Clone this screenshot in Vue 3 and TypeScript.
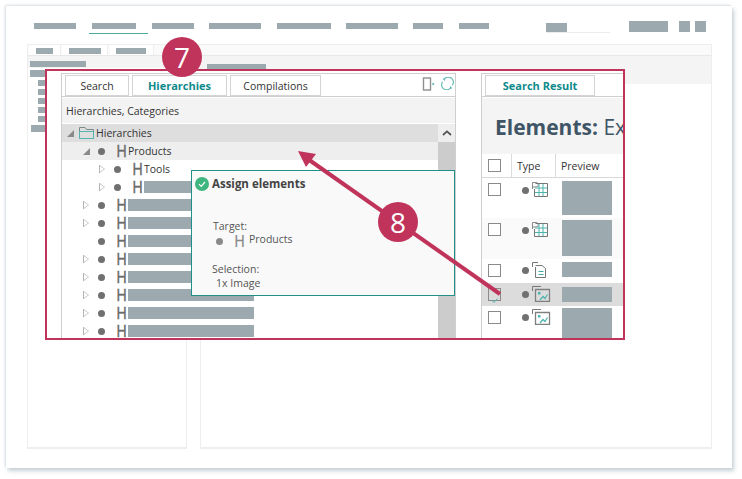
<script setup lang="ts">

	interface TreeRow {
		level: number;
		toggle: 'open' | 'closed' | 'none';
		label?: string;
		bar: number;
		active?: boolean;
	}

	interface ResultRow {
		icon: 'table' | 'doc' | 'image';
		height: number;
		thumbTop: number;
		thumbHeight: number;
		iconTop: number;
		stripe?: boolean;
		selected?: boolean;
	}

	const navBars = [
		{ left: 0, width: 42 },
		{ left: 16, width: 44 },
		{ left: 16, width: 42 },
		{ left: 15, width: 52 },
		{ left: 16, width: 54 },
		{ left: 15, width: 52 },
		{ left: 15, width: 30 },
		{ left: 16, width: 30 },
	];

	const sideBars = [79, 88, 97, 105, 114];

	const treeRows: TreeRow[] = [
		{ level: 1, toggle: 'open', label: 'Products', bar: 0, active: true },
		{ level: 2, toggle: 'closed', label: 'Tools', bar: 0 },
		{ level: 2, toggle: 'closed', bar: 110 },
		{ level: 1, toggle: 'closed', bar: 126 },
		{ level: 1, toggle: 'closed', bar: 126 },
		{ level: 1, toggle: 'none', bar: 126 },
		{ level: 1, toggle: 'closed', bar: 126 },
		{ level: 1, toggle: 'closed', bar: 126 },
		{ level: 1, toggle: 'closed', bar: 126 },
		{ level: 1, toggle: 'closed', bar: 126 },
		{ level: 1, toggle: 'closed', bar: 126 },
	];

	const resultRows: ResultRow[] = [
		{ icon: 'table', height: 40, thumbTop: 3, thumbHeight: 34, iconTop: 4 },
		{ icon: 'table', height: 41, thumbTop: 2, thumbHeight: 36, iconTop: 4, stripe: true },
		{ icon: 'doc', height: 24, thumbTop: 3, thumbHeight: 15, iconTop: 3 },
		{ icon: 'image', height: 23, thumbTop: 4, thumbHeight: 15, iconTop: 3, selected: true },
		{ icon: 'image', height: 40, thumbTop: 2, thumbHeight: 34, iconTop: 3 },
	];

</script>

<template>
	<div class="page">
		<div class="sheet">
			<nav class="top-nav">
				<div class="nav-items">
					<span
						v-for="(item, i) in navBars"
						:key="i"
						class="nav-item"
						:class="{ current: i === 1 }"
						:style="{ marginLeft: item.left + 'px', width: item.width + 'px' }"
					></span>
				</div>
				<div class="nav-tools">
					<div class="nav-search"><span class="block"></span></div>
					<span class="block wide"></span>
					<span class="block square first"></span>
					<span class="block square"></span>
				</div>
			</nav>

			<div class="back-app">
				<div class="back-tabs">
					<div class="back-tab t1"><span></span></div>
					<div class="back-tab t2"><span></span></div>
					<div class="back-tab t3"><span></span></div>
				</div>
				<div class="back-body">
					<aside class="back-side">
						<div class="side-head"><span class="block"></span></div>
						<span class="block side-root"></span>
						<span v-for="top in sideBars" :key="top" class="block side-leaf"></span>
						<span class="block side-root second"></span>
					</aside>
					<section class="back-main">
						<div class="main-head"><span class="block"></span></div>
					</section>
				</div>
			</div>

			<div class="callout">
				<div class="pane tree-pane">
					<div class="tabs">
						<div class="tab">Search</div>
						<div class="tab active">Hierarchies</div>
						<div class="tab">Compilations</div>
						<div class="tab-tools">
							<svg width="13" height="14" viewBox="0 0 13 14">
								<rect x="1.5" y="1" width="7" height="12" fill="#fff" stroke="#8f8f8f" stroke-width="1.4" />
								<path d="M10.5 5.5 L12.5 7 L10.5 8.5 Z" fill="#45aaa5" />
							</svg>
							<svg width="13" height="13" viewBox="0 0 13 13" fill="none">
								<path d="M3.2 2.2 A5 5 0 0 1 11.4 8.2 M9.8 10.8 A5 5 0 0 1 1.6 4.8" stroke="#5cb6b1" stroke-width="1.1" />
								<path d="M1.6 1.6 L4.4 1.4 L3.6 4 Z M11.4 11.4 L8.6 11.6 L9.4 9 Z" fill="#5cb6b1" />
							</svg>
						</div>
					</div>
					<div class="pane-title">Hierarchies, Categories</div>
					<div class="tree">
						<div class="tree-list">
							<div class="tree-row root">
								<span class="toggle root-toggle"><i class="tri-filled"></i></span>
								<svg class="folder" width="15" height="12" viewBox="0 0 15 12" fill="none">
									<path d="M0.5 11.5 V0.5 H6 L7.5 2.5 H14.5 V11.5 Z" stroke="#7a8a8a" />
									<path d="M0.5 4.5 H14.5 V11.5 H0.5 Z" stroke="#55b5b0" />
								</svg>
								<span class="row-label">Hierarchies</span>
							</div>
							<div
								v-for="(row, i) in treeRows"
								:key="i"
								class="tree-row"
								:class="['level-' + row.level, { active: row.active }]"
							>
								<span class="toggle">
									<i v-if="row.toggle === 'open'" class="tri-filled"></i>
									<i v-else-if="row.toggle === 'closed'" class="tri-open"></i>
								</span>
								<span class="dot"></span>
								<span class="h-mark">H</span>
								<span v-if="row.label" class="row-label">{{ row.label }}</span>
								<span v-else class="block row-bar" :style="{ width: row.bar + 'px' }"></span>
							</div>
						</div>
						<div class="scrollbar">
							<div class="scroll-up">
								<svg width="10" height="6" viewBox="0 0 10 6" fill="none">
									<path d="M1 5 L5 1.4 L9 5" stroke="#555" stroke-width="1.8" />
								</svg>
							</div>
						</div>
					</div>

					<div class="assign-tip">
						<div class="tip-title">
							<svg width="14" height="14" viewBox="0 0 14 14" fill="none">
								<circle cx="7" cy="7" r="7" fill="#3fb67f" />
								<path d="M4 7.2 L6.2 9.4 L10 5" stroke="#fff" stroke-width="1.2" />
							</svg>
							<span>Assign elements</span>
						</div>
						<div class="tip-label target">Target:</div>
						<div class="tip-target">
							<span class="dot light"></span>
							<span class="h-mark light">H</span>
							<span class="tip-product">Products</span>
						</div>
						<div class="tip-label selection">Selection:</div>
						<div class="tip-count">1x Image</div>
					</div>
				</div>

				<div class="pane result-pane">
					<div class="tabs result-tabs">
						<div class="tab active result-tab">Search Result</div>
					</div>
					<div class="result-head">
						<b>Elements:</b> Ex
					</div>
					<div class="result-cols">
						<div class="col-check"><span class="check"></span></div>
						<div class="col-type">Type</div>
						<div class="col-preview">Preview</div>
					</div>
					<div
						v-for="(row, i) in resultRows"
						:key="i"
						class="result-row"
						:class="{ stripe: row.stripe, selected: row.selected }"
						:style="{ height: row.height + 'px' }"
					>
						<div class="col-check">
							<span class="check row-check">
								<svg v-if="row.selected" width="11" height="11" viewBox="0 0 11 11" fill="none">
									<path d="M2.5 5 L5 7.5 L8.5 3.5" stroke="#55b5b0" />
								</svg>
							</span>
						</div>
						<div class="type-cell" :style="{ paddingTop: row.iconTop + 'px' }">
							<span class="dot"></span>
							<svg v-if="row.icon === 'table'" class="type-icon" width="18" height="16" viewBox="0 0 18 16" fill="none">
								<path d="M0.5 7 V0.5 H4 A2 2 0 0 1 4 5 H0.5" stroke="#8a8a8a" />
								<path d="M3 6 H15 M3 10.5 H15 M7 2 V14 M11 2 V14" stroke="#4db3ae" />
								<path d="M3.5 1.5 H15.5 V14.5 H2.5 V7" stroke="#777" />
							</svg>
							<svg v-else-if="row.icon === 'doc'" class="type-icon" width="18" height="16" viewBox="0 0 18 16" fill="none">
								<path d="M0.5 5 V0.5 H6" stroke="#777" />
								<path d="M3.5 5 V15.5 H13.5 V6.5 L10 3.5 H3.5" stroke="#777" />
								<path d="M6.5 9.5 H11.5 M6.5 12.5 H11.5" stroke="#3fa9a4" stroke-width="1.2" />
							</svg>
							<svg v-else class="type-icon" width="19" height="16" viewBox="0 0 19 16" fill="none">
								<path d="M0.5 5 V0.5 H9" stroke="#777" />
								<path d="M3.5 3.5 H17.5 V15.5 H3.5 Z" stroke="#808080" stroke-width="1.3" />
								<rect x="6" y="6" width="2.5" height="2.5" fill="#4db3ae" />
								<path d="M8 14 L11 10.5 L13 12.5 L15.5 8.5" stroke="#4db3ae" stroke-width="1.2" />
							</svg>
						</div>
						<div class="thumb-cell">
							<span class="block thumb" :style="{ marginTop: row.thumbTop + 'px', height: row.thumbHeight + 'px' }"></span>
						</div>
					</div>
				</div>
			</div>

			<svg class="pointer" width="742" height="479" viewBox="0 0 742 479" fill="none">
				<path d="M500 294 L305 157" stroke="#c0345b" stroke-width="4" />
				<path d="M298 151 L316 154 L306 167 Z" fill="#c0345b" />
			</svg>
			<div class="badge seven">7</div>
			<div class="badge eight">8</div>
		</div>
	</div>
</template>

<style>
html, body {
	margin: 0;
	background: #fff;
}
</style>

<style scoped>
.page {
	box-sizing: border-box;
	width: 742px;
	height: 479px;
	padding: 6px 0 0 6px;
	overflow: hidden;
}
.sheet {
	position: relative;
	box-sizing: border-box;
	width: 726px;
	height: 462px;
	padding: 15px 20px 19px 21px;
	background: #fff;
	box-shadow: 2px 3px 4px rgba(120, 145, 160, 0.42), -1px -1px 2px rgba(120, 145, 160, 0.28);
	font-family: "Open Sans", "Noto Sans", sans-serif;
	color: #333;
}

.block {
	display: block;
	background: #9caab0;
}

.top-nav {
	display: flex;
	justify-content: space-between;
	height: 23px;
}
.nav-items {
	display: flex;
	padding-left: 7px;
}
.nav-item {
	position: relative;
	height: 6px;
	margin-top: 2px;
	background: #9caab0;
}
.nav-item.current::after {
	content: "";
	position: absolute;
	left: -3px;
	right: -12px;
	top: 10px;
	height: 1px;
	background: #4ea9a0;
}
.nav-tools {
	display: flex;
	gap: 5px;
	padding-right: 6px;
}
.nav-search {
	width: 64px;
	height: 11px;
	margin-right: 14px;
	border-bottom: 1px solid #ececec;
}
.nav-search .block {
	width: 21px;
	height: 9px;
	margin-top: 2px;
}
.nav-tools > .block {
	height: 11px;
}
.wide {
	width: 39px;
	margin-right: 6px;
}
.square {
	width: 11px;
}

.back-app {
	display: flex;
	flex-direction: column;
	height: 405px;
}
.back-tabs {
	display: flex;
	height: 10px;
	border: 1px solid #eeeeee;
	border-bottom-color: #e8e8e8;
	background: #fafafa;
}
.back-tab {
	box-sizing: border-box;
	height: 10px;
	padding-top: 3px;
	background: #fff;
	border-right: 1px solid #eee;
}
.back-tab span {
	display: block;
	height: 6px;
	background: #9caab0;
}
.t1 { width: 32px; margin-left: 1px; padding-left: 7px; padding-right: 7px; }
.t2 { width: 46px; margin-left: 1px; padding-left: 7px; padding-right: 6px; }
.t3 { width: 44px; margin-left: 2px; padding-left: 6px; padding-right: 7px; }

.back-body {
	flex: 1;
	display: flex;
	gap: 13px;
}
.back-side {
	width: 160px;
	box-sizing: border-box;
	border: 1px solid #eeeeee;
	border-top: 0;
	border-bottom-width: 2px;
}
.side-head {
	height: 12px;
	padding: 5px 0 0 2px;
	box-sizing: border-box;
	background: #f4f4f4;
}
.side-head .block {
	width: 56px;
	height: 6px;
}
.side-root {
	width: 16px;
	height: 7px;
	margin: 2px 0 0 2px;
}
.side-leaf {
	width: 8px;
	height: 6px;
	margin: 3px 0 0 10px;
}
.side-root.second {
	width: 15px;
	margin: 3px 0 0 3px;
}
.back-main {
	flex: 1;
	border: 1px solid #eeeeee;
	border-top: 0;
	border-bottom-width: 2px;
}
.main-head {
	height: 28px;
	margin-left: -14px;
	background: #f4f4f4;
	padding: 8px 0 0 20px;
	box-sizing: border-box;
}
.main-head .block {
	width: 59px;
	height: 7px;
}

.callout {
	position: absolute;
	left: 39px;
	top: 63px;
	box-sizing: border-box;
	width: 580px;
	height: 271px;
	display: flex;
	padding: 2px 0 0 14px;
	border: 2px solid #c0345b;
	background: #fff;
	overflow: hidden;
}
.pane {
	box-sizing: border-box;
	flex-shrink: 0;
	height: 300px;
	border: 1px solid #cfcfcf;
	border-bottom: 0;
}
.tree-pane {
	position: relative;
	width: 395px;
}
.result-pane {
	width: 150px;
	margin-left: 25px;
}

.tabs {
	display: flex;
	gap: 3px;
	height: 23px;
	box-sizing: border-box;
	padding: 1px 0 0 3px;
	border-bottom: 1px solid #cfcfcf;
}
.tab {
	box-sizing: border-box;
	height: 21px;
	border: 1px solid #d4d4d4;
	font-size: 10.5px;
	line-height: 20px;
	text-align: center;
	color: #333;
}
.tab:nth-child(1) { width: 64px; }
.tab:nth-child(2) { width: 95px; }
.tab:nth-child(3) { width: 91px; }
.tab.active {
	font-size: 11px;
	font-weight: 700;
	color: #0f8a8c;
}
.tab-tools {
	display: flex;
	align-items: flex-start;
	gap: 6px;
	margin-left: auto;
	padding: 2px 1px 0 0;
}
.result-tabs .result-tab {
	width: 110px;
}
.pane-title {
	height: 25px;
	margin-top: 1px;
	padding-left: 4px;
	background: #f3f3f3;
	font-size: 10.5px;
	line-height: 27px;
	color: #333;
}

.tree {
	display: flex;
	margin-top: 1px;
}
.tree-list {
	flex: 1;
}
.tree-row {
	position: relative;
	display: flex;
	align-items: center;
	height: 18px;
}
.tree-row.root {
	background: #dedede;
}
.tree-row.active {
	background: #eeeeee;
}
.toggle {
	display: flex;
	justify-content: center;
	width: 8px;
	margin-right: 8px;
}
.level-1 { padding-left: 20px; }
.level-2 { padding-left: 36px; }
.root { padding-left: 4px; }
.root-toggle {
	margin-right: 5px;
}
.tri-filled {
	width: 0;
	height: 0;
	border-left: 7px solid transparent;
	border-bottom: 7px solid #8a8a8a;
}
.tri-open {
	box-sizing: border-box;
	width: 6px;
	height: 9px;
	background: #b5b5b5;
	clip-path: polygon(0 0, 100% 50%, 0 100%, 0 0, 1px 16%, 1px 84%, 85% 50%, 1px 16%);
}
.dot {
	flex-shrink: 0;
	width: 7px;
	height: 7px;
	border-radius: 50%;
	background: #707070;
}
.dot.light {
	background: #8a8a8a;
}
.h-mark {
	flex-shrink: 0;
	width: 10px;
	margin: 2px 0 0 11px;
	font-family: "Liberation Sans", sans-serif;
	font-size: 16px;
	line-height: 16px;
	color: #6a6a6a;
	-webkit-text-stroke: 0.3px #6a6a6a;
	transform: scaleX(0.88);
}
.h-mark.light {
	color: #8a8a8a;
	-webkit-text-stroke: 0.2px #8a8a8a;
}
.row-label {
	margin-left: 2px;
	font-size: 10.5px;
	color: #333;
}
.root .row-label {
	margin-left: 0;
}
.folder {
	margin-right: 2px;
}
.row-bar {
	height: 12px;
	margin-left: 2px;
}
.scrollbar {
	flex-shrink: 0;
	width: 17px;
	height: 220px;
	background: #cccccc;
}
.scroll-up {
	display: flex;
	align-items: center;
	justify-content: center;
	height: 18px;
	background: #eeeeee;
}

.assign-tip {
	position: absolute;
	left: 129px;
	top: 96px;
	box-sizing: border-box;
	width: 264px;
	height: 126px;
	border: 1px solid #1f8f8a;
	background: #f9f9f9;
	color: #555;
	font-size: 10.5px;
}
.tip-title {
	display: flex;
	align-items: center;
	gap: 3px;
	margin: 5px 0 0 3px;
	font-size: 11.5px;
	font-weight: 700;
	color: #444;
}
.tip-label {
	padding-left: 20px;
	line-height: 14px;
}
.tip-label.target {
	margin-top: 28px;
	padding-left: 21px;
}
.tip-label.selection {
	margin-top: 13px;
}
.tip-target {
	display: flex;
	align-items: center;
	height: 16px;
	padding-left: 24px;
}
.tip-product {
	margin-left: 5px;
	margin-top: -4px;
}
.tip-count {
	padding-left: 24px;
	line-height: 14px;
}

.result-head {
	height: 56px;
	margin-top: 1px;
	padding-left: 13px;
	background: #f4f4f4;
	font-size: 21px;
	line-height: 59px;
	color: #3f5566;
	white-space: nowrap;
	overflow: hidden;
}
.result-cols {
	display: flex;
	height: 23px;
	border-bottom: 1px solid #d8d8d8;
	font-size: 10.5px;
	line-height: 24px;
	color: #333;
}
.col-check {
	box-sizing: border-box;
	flex-shrink: 0;
	width: 30px;
	padding-left: 6px;
}
.result-cols .col-check {
	padding-top: 5px;
	border-right: 1px solid #dcdcdc;
}
.col-type {
	width: 44px;
	padding-left: 5px;
	box-sizing: border-box;
	border-right: 1px solid #dcdcdc;
}
.col-preview {
	padding-left: 5px;
}
.check {
	display: block;
	box-sizing: border-box;
	width: 13px;
	height: 13px;
	border: 1px solid #8a8a8a;
	background: #fff;
}
.row-check {
	margin-top: 5px;
}
.result-row {
	display: flex;
	overflow: hidden;
}
.result-row.stripe {
	background: #fafafa;
}
.result-row.selected {
	background: #dcdcdc;
}
.selected .check {
	background: transparent;
}
.type-cell {
	box-sizing: border-box;
	display: flex;
	align-items: flex-start;
	width: 50px;
	padding-left: 10px;
}
.type-cell .dot {
	margin: 5px 0 0 0;
}
.type-icon {
	margin-left: 3px;
}
.thumb-cell {
	width: 50px;
}
.thumb {
	width: 50px;
}

.pointer {
	position: absolute;
	left: -6px;
	top: -6px;
	pointer-events: none;
}
.badge {
	position: absolute;
	width: 40px;
	height: 40px;
	border-radius: 50%;
	background: #c0345b;
	color: #fff;
	font-size: 28px;
	line-height: 40px;
	text-align: center;
}
.seven {
	left: 156px;
	top: 31px;
}
.eight {
	left: 372px;
	top: 196px;
}
</style>
